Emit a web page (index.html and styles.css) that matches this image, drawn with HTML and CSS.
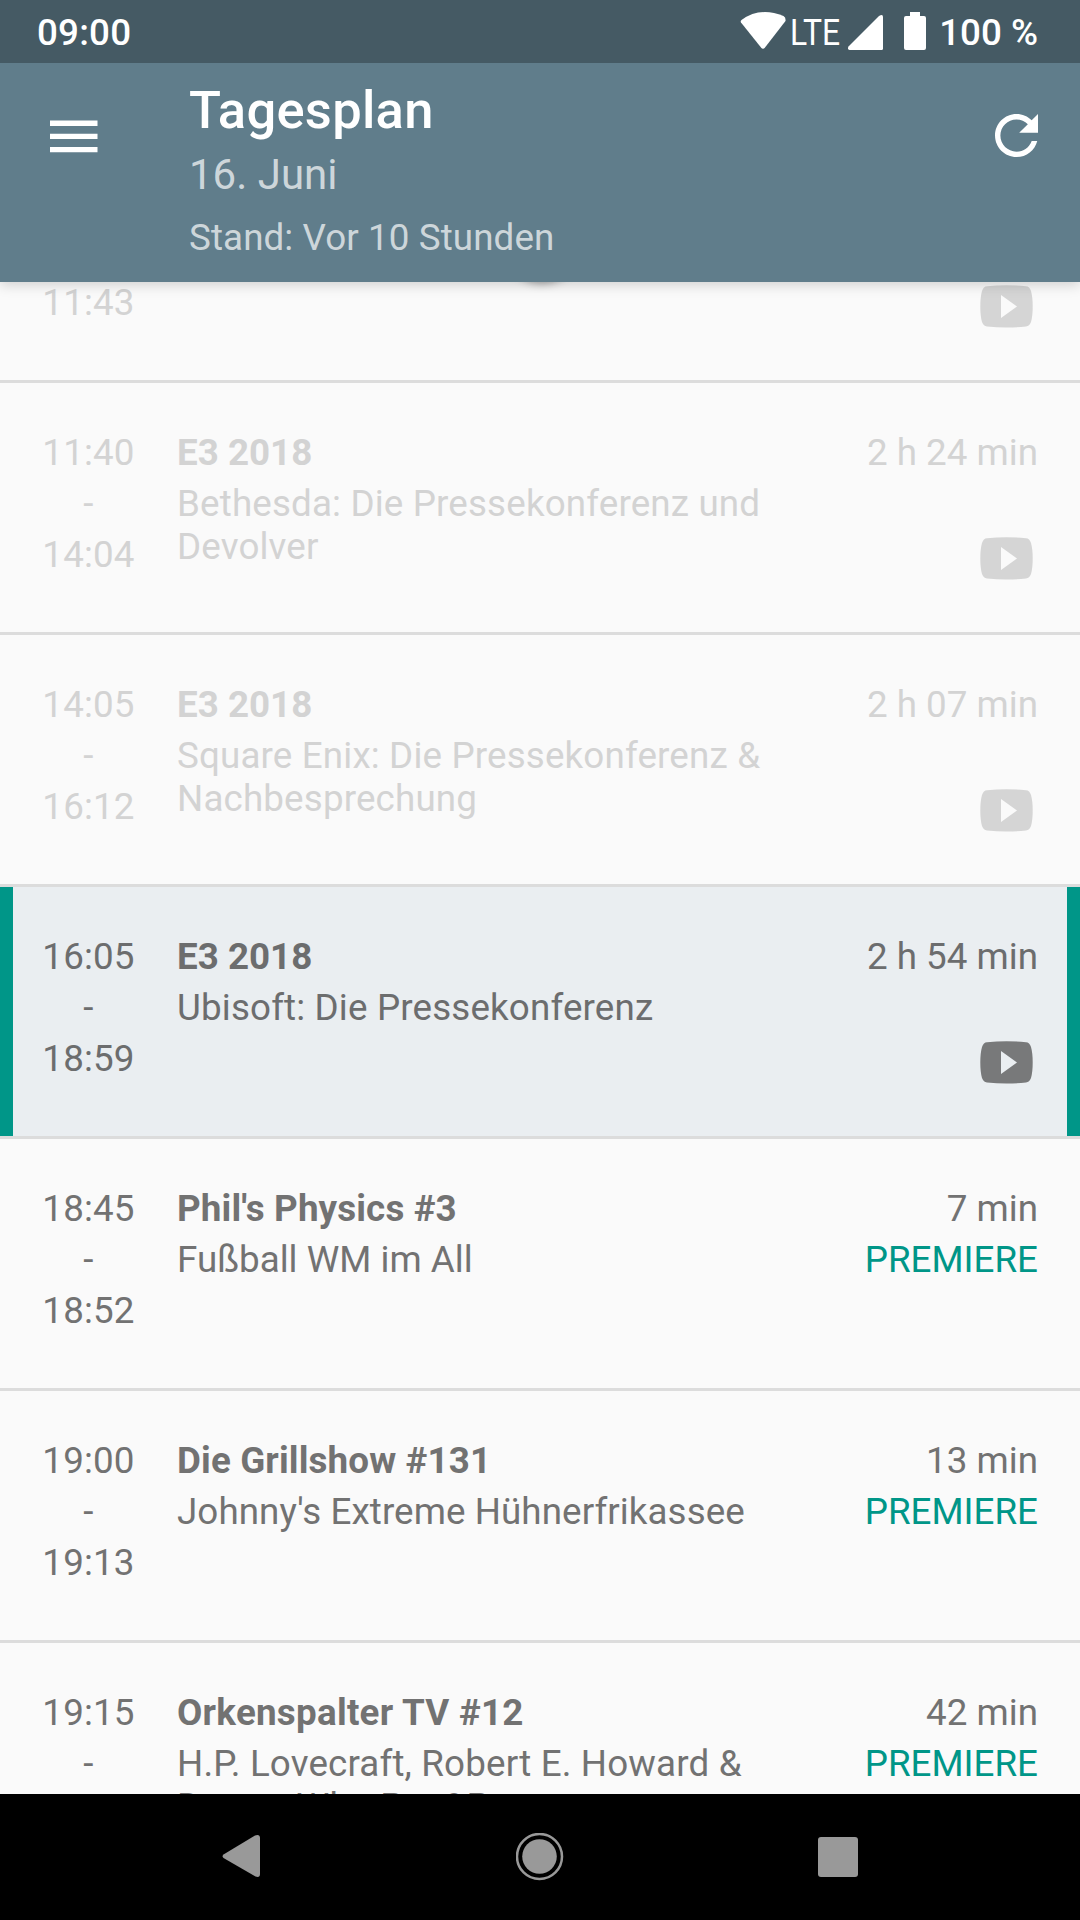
FILE: index.html
```html
<!DOCTYPE html>
<html lang="de">
<head>
<meta charset="utf-8">
<title>Tagesplan</title>
<link rel="stylesheet" href="styles.css">
</head>
<body>
<svg class="defs" width="0" height="0" aria-hidden="true">
  <symbol id="youtube" viewBox="0 0 53 43">
    <path fill-rule="evenodd" d="M7 1.2Q26.500-.9 46 1.200Q49.500 1.400 51 6Q52.700 12 52.700 21.400Q52.700 31 51 37Q49.500 41.200 46 41.500Q26.500 43.500 7 41.500Q3.500 41.200 2 37Q.3 31 .3 21.400Q.3 12 2 6Q3.500 1.400 7 1.200ZM21 10V33L37 21.500Z"/>
  </symbol>
</svg>
<div class="screen">
  <header class="status">
    <span class="clock">09:00</span>
    <svg class="status-icons" width="184" height="63" viewBox="0 0 184 63" fill="#fff">
      <path d="M1.500 20Q20 6.500 43.500 16Q46 17.500 45.500 21L25 47.500Q23 50 21 47.500L1 22.500Q.2 21 1.500 20Z"/>
      <text x="50" y="45" textLength="50" lengthAdjust="spacingAndGlyphs">LTE</text>
      <path d="M109.500 50Q107 49.500 108.500 46.500L139 16Q143 13.500 143 17V48.500Q143 50 141.500 50Z"/>
      <path d="M170 12h10v4h4q2 0 2 2v30q0 2-2 2h-18q-2 0-2-2v-30q0-2 2-2h4z"/>
    </svg>
    <span class="battery">100 %</span>
  </header>
  <div class="appbar">
    <svg class="menu" width="48" height="34" viewBox="0 0 48 34" fill="#fff"><path d="M0 .5h47.500v5.500H0zM0 13.700h47.500v5.400H0zM0 26.900h47.500v5.400H0z"/></svg>
    <div class="heading">
      <h1>Tagesplan</h1>
      <p class="date">16. Juni</p>
      <p class="updated">Stand: Vor 10 Stunden</p>
    </div>
    <svg class="refresh" width="43" height="43" viewBox="4 4 16 16" fill="#fff"><path d="M17.650 6.350C16.200 4.900 14.210 4 12 4c-4.420 0-7.990 3.580-7.990 8s3.570 8 7.990 8c3.730 0 6.840-2.550 7.730-6h-2.080c-.82 2.330-3.040 4-5.650 4-3.310 0-6-2.690-6-6s2.690-6 6-6c1.660 0 3.140.69 4.220 1.780L13 11h7V4l-2.350 2.350z"/></svg>
  </div>
  <main class="list">
    <div class="pull"></div>
    <article class="row past clipped">
      <div class="time"><span>11:43</span></div>
      <div class="show"></div>
      <div class="meta"><svg class="yt"><use href="#youtube"/></svg></div>
    </article>
    <article class="row past">
      <div class="time"><span>11:40</span><span>-</span><span>14:04</span></div>
      <div class="show"><h2>E3 2018</h2><p>Bethesda: Die Pressekonferenz und<br>Devolver</p></div>
      <div class="meta"><span>2 h 24 min</span><svg class="yt"><use href="#youtube"/></svg></div>
    </article>
    <article class="row past">
      <div class="time"><span>14:05</span><span>-</span><span>16:12</span></div>
      <div class="show"><h2>E3 2018</h2><p>Square Enix: Die Pressekonferenz &amp;<br>Nachbesprechung</p></div>
      <div class="meta"><span>2 h 07 min</span><svg class="yt"><use href="#youtube"/></svg></div>
    </article>
    <article class="row current">
      <div class="time"><span>16:05</span><span>-</span><span>18:59</span></div>
      <div class="show"><h2>E3 2018</h2><p>Ubisoft: Die Pressekonferenz</p></div>
      <div class="meta"><span>2 h 54 min</span><svg class="yt"><use href="#youtube"/></svg></div>
    </article>
    <article class="row">
      <div class="time"><span>18:45</span><span>-</span><span>18:52</span></div>
      <div class="show"><h2 class="loose">Phil's Physics #3</h2><p class="tight">Fußball WM im All</p></div>
      <div class="meta"><span>7 min</span><span class="tag">PREMIERE</span></div>
    </article>
    <article class="row">
      <div class="time"><span>19:00</span><span>-</span><span>19:13</span></div>
      <div class="show"><h2 class="loose">Die Grillshow #131</h2><p class="snug">Johnny's Extreme Hühnerfrikassee</p></div>
      <div class="meta"><span>13 min</span><span class="tag">PREMIERE</span></div>
    </article>
    <article class="row">
      <div class="time"><span>19:15</span><span>-</span></div>
      <div class="show"><h2 class="looser">Orkenspalter TV #12</h2><p>H.P. Lovecraft, Robert E. Howard &amp;<br>Doctor Who Pen&amp;Paper</p></div>
      <div class="meta"><span>42 min</span><span class="tag">PREMIERE</span></div>
    </article>
  </main>
  <nav class="navbar">
    <svg width="40" height="46" viewBox="0 0 40 46"><path d="M1.500 20.500L33 1.500Q38 0 38 4V40Q38 44 33.500 42.500L1.500 24Q-.5 22.300 1.500 20.500Z"/></svg>
    <svg width="48" height="48" viewBox="0 0 48 48"><circle cx="23.500" cy="23.500" r="17.300"/><circle class="ring" cx="23.500" cy="23.500" r="22.500"/></svg>
    <svg width="40" height="40" viewBox="0 0 40 40"><rect width="40" height="40" rx="3"/></svg>
  </nav>
</div>
</body>
</html>
```
FILE: styles.css
```css
* { box-sizing: border-box; }
body, h1, h2, p { margin: 0; }
body { font-family: Roboto, sans-serif; font-size: 36.75px; background: #fafafa; }
.defs { display: block; }
.screen { width: 1080px; height: 1920px; display: flex; flex-direction: column; overflow: hidden; }

.status { flex: none; height: 63px; display: flex; align-items: flex-start; padding: 0 42px 0 37px; background: #455a64; color: #fff; font-weight: 500; line-height: 66px; }
.clock { letter-spacing: .2px; }
.status-icons { margin-left: auto; margin-right: 15px; overflow: visible; font-weight: 400; }

.appbar { flex: none; height: 219px; display: flex; align-items: flex-start; padding: 0 42px 0 50px; background: #607d8b; color: #fff; position: relative; z-index: 2; box-shadow: 0 3px 12px rgba(0, 0, 0, .17); clip-path: inset(0 0 -24px 0); }
.menu { margin-top: 57px; }
.heading { flex: 1; padding-top: 15px; margin-left: 91px; }
.heading h1 { font-size: 52.5px; line-height: 64px; font-weight: 500; letter-spacing: .27px; }
.date { font-size: 42px; line-height: 66px; color: rgba(255, 255, 255, .7); }
.updated { line-height: 60px; letter-spacing: .1px; color: rgba(255, 255, 255, .7); }
.refresh { margin-top: 51px; }

.list { flex: 1; min-height: 0; display: flex; flex-direction: column; overflow: hidden; background: #fafafa; color: #727272; position: relative; }
.pull { position: absolute; left: 504px; top: -80px; width: 76px; height: 76px; border-radius: 50%; box-shadow: 0 5px 10px rgba(0, 0, 0, .4); }
.row { flex: none; height: 252px; display: grid; grid-template-columns: 93px 1fr auto; column-gap: 42px; padding: 44px 42px 0; border-bottom: 3px solid #dcdcdc; line-height: 51px; }
.time { display: flex; flex-direction: column; align-items: center; letter-spacing: .15px; }
.show h2 { font-size: inherit; line-height: 51px; font-weight: 700; }
.show p { line-height: 43px; padding-top: 4px; white-space: nowrap; letter-spacing: .16px; }
.show .tight { letter-spacing: 0; }
.show .snug { letter-spacing: .08px; }
.show .loose { letter-spacing: .14px; }
.show .looser { letter-spacing: .27px; }
.meta { display: flex; flex-direction: column; align-items: flex-end; height: 160px; }
.yt { width: 53px; height: 43px; margin: auto 5px 7px 0; fill: #78797a; }
.past { color: #d3d3d3; }
.past .yt { fill: #d5d5d5; }
.clipped { height: 101px; padding-top: 0; line-height: 41px; }
.clipped .meta { height: 53px; }
.current { background: linear-gradient(#009688, #009688) left / 13px 100% no-repeat, linear-gradient(#009688, #009688) right / 13px 100% no-repeat, #eaeef1; color: #6c6d6e; }
.tag { color: #009688; }

.navbar { flex: none; height: 126px; display: flex; align-items: center; justify-content: space-between; padding: 0 222px; background: #000; fill: #999; }
.ring { fill: none; stroke: #999; stroke-width: 2.5; }
```
